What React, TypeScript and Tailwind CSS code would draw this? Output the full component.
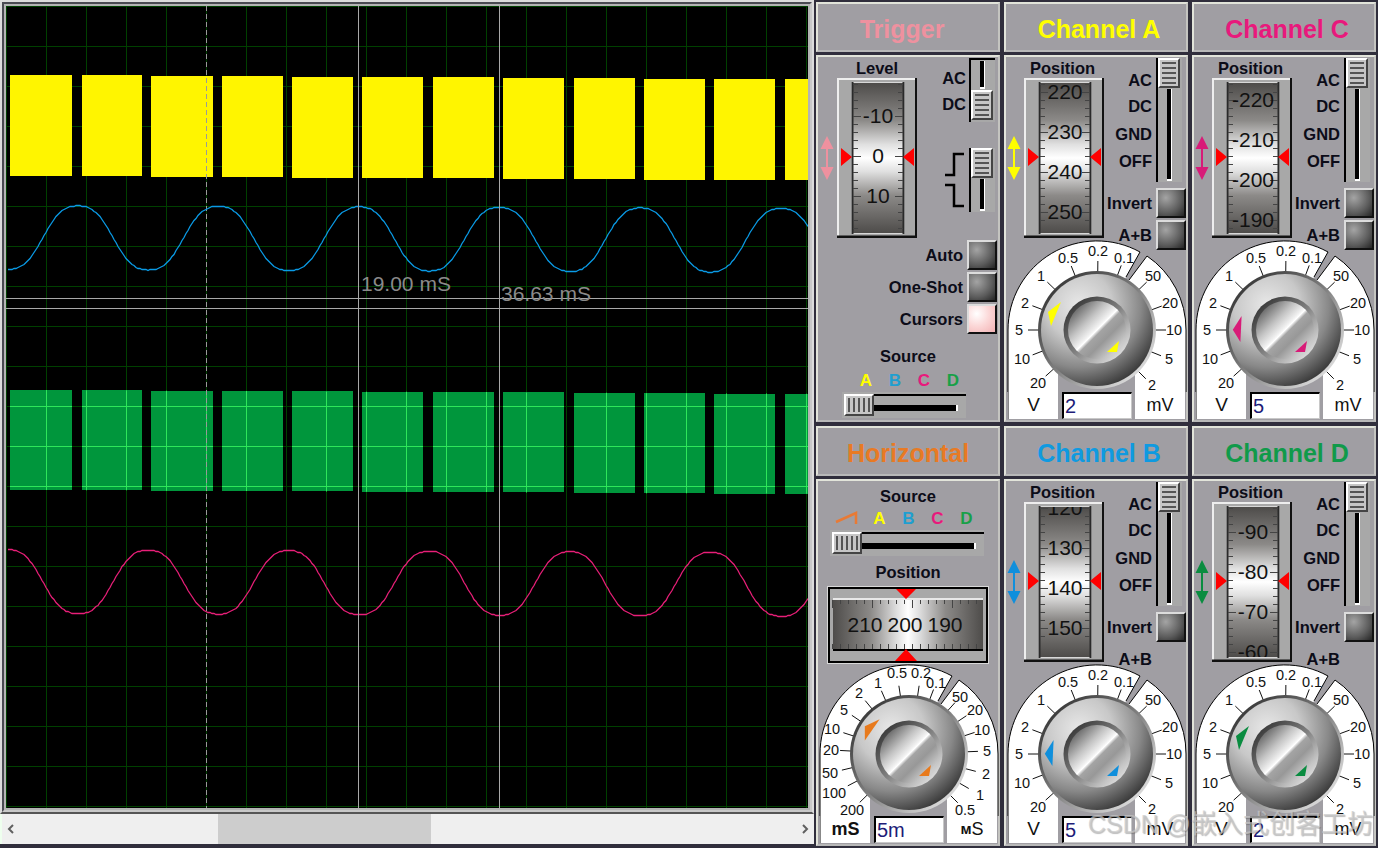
const SANS = "font-['Liberation_Sans',Arial,sans-serif]";

const BLOCKS: [number, number][] = [
  [4, 66], [76, 136], [145, 207], [216, 277], [286, 347], [356, 417],
  [427, 488], [497, 558], [568, 629], [638, 699], [708, 769], [779, 802],
];

// scope trace, x and y are inside the 802px canvas
function wave(mid: number, amp: number, peakX: number, drift: number) {
  const pts: string[] = [];
  for (let x = 2; x <= 802; x += 2) {
    const t = ((x - peakX) / 140.6) * Math.PI * 2;
    const y = mid + (x / 802) * drift - (amp * (Math.cos(t) - 0.06 * Math.cos(3 * t))) / 0.94;
    pts.push(`${x},${Math.round(y) + 0.5}`);
  }
  return pts.join(" ");
}

function Scope() {
  const lines = Array.from({ length: 21 }, (_, i) => i * 40 + 0.5);
  const grid = (stroke: string) => (
    <g stroke={stroke} strokeWidth="1" shapeRendering="crispEdges">
      {lines.map((p) => (
        <line key={`v${p}`} x1={p} y1="0" x2={p} y2="802" />
      ))}
      {lines.map((p) => (
        <line key={`h${p}`} x1="0" y1={p} x2="802" y2={p} />
      ))}
    </g>
  );
  return (
    <svg width="802" height="802" className="block bg-black">
      <defs>
        <clipPath id="green-clip">
          {BLOCKS.map(([a, b], i) => (
            <rect key={a} x={a} y={384 + i * 0.35} width={b - a} height="100" />
          ))}
        </clipPath>
      </defs>
      {grid("#004000")}
      <g shapeRendering="crispEdges">
        {BLOCKS.map(([a, b], i) => (
          <rect key={a} x={a} y={Math.round(69 + i * 0.4)} width={b - a} height="101" fill="#fff500" />
        ))}
        {BLOCKS.map(([a, b], i) => (
          <rect key={a} x={a} y={Math.round(384 + i * 0.35)} width={b - a} height="100" fill="#00963c" />
        ))}
      </g>
      <g clipPath="url(#green-clip)">{grid("#2ee65a")}</g>
      <line x1="200.5" y1="0" x2="200.5" y2="802" stroke="#9a9a9a" strokeDasharray="5 3" shapeRendering="crispEdges" />
      <polyline points={wave(231, 32, 72, 3)} fill="none" stroke="#0a9be6" strokeWidth="1.3" />
      <polyline points={wave(575, -32, 72, 3)} fill="none" stroke="#e81f78" strokeWidth="1.3" />
      <g stroke="#a8a8a8" strokeWidth="1" shapeRendering="crispEdges">
        <line x1="352.5" y1="0" x2="352.5" y2="802" />
        <line x1="493.5" y1="0" x2="493.5" y2="802" />
        <line x1="0" y1="292.5" x2="802" y2="292.5" />
        <line x1="0" y1="302.5" x2="802" y2="302.5" />
      </g>
      <text x="355" y="285" fontSize="21" fill="#8a8a8a" fontFamily="Liberation Sans">19.00 mS</text>
      <text x="495" y="295" fontSize="21" fill="#8a8a8a" fontFamily="Liberation Sans">36.63 mS</text>
    </svg>
  );
}

function Chevron({ left }: { left?: boolean }) {
  return (
    <svg width="8" height="10" viewBox="0 0 8 10" className="block">
      <path d={left ? "M6 1 L2 5 L6 9" : "M2 1 L6 5 L2 9"} fill="none" stroke="#606060" strokeWidth="2" />
    </svg>
  );
}

function ScrollBar() {
  return (
    <div className="flex h-[30px] items-center bg-[#efefef] border-l-2 border-[#efe]">
      <div className="flex w-[216px] pl-[5px]">
        <Chevron left />
      </div>
      <div className="h-full w-[213px] bg-[#cdcdcd]" />
      <div className="flex flex-1 justify-end pr-[5px]">
        <Chevron />
      </div>
    </div>
  );
}

function SharedDefs() {
  return (
    <svg width="0" height="0" className="block">
      <defs>
        <linearGradient id="drum-v" x1="0" y1="0" x2="0" y2="1">
          <stop offset="0" stopColor="#4e4c4a" />
          <stop offset="0.25" stopColor="#8c8a88" />
          <stop offset="0.41" stopColor="#e0e0e0" />
          <stop offset="0.5" stopColor="#ffffff" />
          <stop offset="0.59" stopColor="#e0e0e0" />
          <stop offset="0.75" stopColor="#8c8a88" />
          <stop offset="1" stopColor="#4e4c4a" />
        </linearGradient>
        <linearGradient id="drum-h" x1="0" y1="0" x2="1" y2="0">
          <stop offset="0" stopColor="#4e4c4a" />
          <stop offset="0.25" stopColor="#8c8a88" />
          <stop offset="0.42" stopColor="#dcdcdc" />
          <stop offset="0.5" stopColor="#ffffff" />
          <stop offset="0.58" stopColor="#dcdcdc" />
          <stop offset="0.75" stopColor="#8c8a88" />
          <stop offset="1" stopColor="#4e4c4a" />
        </linearGradient>
        <radialGradient id="knob-body" cx="0.34" cy="0.28" r="0.85">
          <stop offset="0" stopColor="#e8e8e8" />
          <stop offset="0.35" stopColor="#c8c8c8" />
          <stop offset="0.65" stopColor="#888888" />
          <stop offset="0.9" stopColor="#3c3c3c" />
          <stop offset="1" stopColor="#2c2c2c" />
        </radialGradient>
        <linearGradient id="knob-rim" x1="0.15" y1="0.15" x2="0.85" y2="0.85">
          <stop offset="0" stopColor="#3e3e3e" />
          <stop offset="0.5" stopColor="#808080" />
          <stop offset="1" stopColor="#d8d8d8" />
        </linearGradient>
        <linearGradient id="knob-cap" x1="0.15" y1="0.15" x2="0.85" y2="0.85">
          <stop offset="0" stopColor="#707070" />
          <stop offset="0.28" stopColor="#c4c4c4" />
          <stop offset="0.46" stopColor="#f0f0f0" />
          <stop offset="0.5" stopColor="#ffffff" />
          <stop offset="0.56" stopColor="#a4a4a4" />
          <stop offset="0.72" stopColor="#989898" />
          <stop offset="1" stopColor="#d0d0d0" />
        </linearGradient>
        <clipPath id="drum-clip">
          <rect x="16" y="5" width="50" height="150" />
        </clipPath>
      </defs>
    </svg>
  );
}

function UpDownArrow({ color }: { color: string }) {
  return (
    <svg width="14" height="44" viewBox="0 0 14 44" className="block shrink-0">
      <path d="M7 0 L13.5 13 L0.5 13 Z M7 44 L13.5 31 L0.5 31 Z" fill={color} />
      <rect x="6" y="12" width="2" height="20" fill={color} />
    </svg>
  );
}

function Drum({ first, values }: { first: number; values: string[] }) {
  const ticks = Array.from({ length: 25 }, (_, i) => first - 64 + i * 8);
  return (
    <svg width="80" height="160" viewBox="0 0 80 160" className="block shrink-0">
      <rect x="0" y="0" width="80" height="160" fill="#a8a8a8" />
      <path d="M0 160 V0 H80 V2 H2 V160 Z" fill="#eeeeee" />
      <path d="M80 0 V160 H0 V157.5 H78 V0 Z" fill="#111" />
      <rect x="14" y="4" width="54" height="152" fill="#d8d8d8" />
      <rect x="16" y="5" width="50" height="150" fill="url(#drum-v)" />
      <rect x="14.5" y="4" width="2" height="152" fill="#2a2a2a" />
      <rect x="65.5" y="4" width="2" height="152" fill="#2a2a2a" />
      <g clipPath="url(#drum-clip)" shapeRendering="crispEdges">
        {ticks.map((y) => {
          const major = (y - first) % 40 === 0;
          return (
            <g key={y} stroke="#444">
              <line x1="16" y1={y} x2={major ? 24 : 21} y2={y} />
              <line x1={major ? 58 : 61} y1={y} x2="66" y2={y} />
            </g>
          );
        })}
      </g>
      <g clipPath="url(#drum-clip)" fontSize="21" fontFamily="Liberation Sans" fill="#111" textAnchor="middle">
        {values.map((v, i) => (
          <text key={v} x="41" y={first + i * 40 + 7}>
            {v}
          </text>
        ))}
      </g>
      <path d="M4 70 L15 79 L4 88 Z M77 70 L66 79 L77 88 Z" fill="#ff0000" />
    </svg>
  );
}

function HDrum() {
  const ticks = Array.from({ length: 19 }, (_, i) => 4 + i * 8);
  return (
    <svg width="162" height="78" viewBox="0 0 162 78" className="block">
      <rect x="0" y="0" width="162" height="78" fill="#d8d8d8" />
      <rect x="2" y="2" width="158" height="74" fill="#a8a8a8" stroke="#000" strokeWidth="2" />
      <rect x="6" y="13" width="150" height="52" fill="url(#drum-h)" />
      <rect x="6" y="12" width="150" height="2" fill="#e8e8e8" />
      <rect x="6" y="63" width="150" height="2" fill="#000" />
      <g stroke="#444" shapeRendering="crispEdges">
        {ticks.map((x) => (
          <g key={x}>
            <line x1={x + 1} y1="14" x2={x + 1} y2={(x - 4) % 40 === 0 ? 22 : 18} />
            <line x1={x + 1} y1="58" x2={x + 1} y2="63" />
          </g>
        ))}
      </g>
      <g fontSize="21" fontFamily="Liberation Sans" fill="#111" textAnchor="middle">
        <text x="38" y="46">210</text>
        <text x="78" y="46">200</text>
        <text x="118" y="46">190</text>
      </g>
      <path d="M69 3 H89 L79 13 Z M68 75 L79 63 L90 75 Z" fill="#ff0000" />
    </svg>
  );
}

type Mark = [string, number, number];

const CHANNEL_MARKS: Mark[] = [
  ["0.1", 120, 18], ["0.2", 94, 11], ["0.5", 64, 18], ["1", 37, 36], ["2", 21, 63],
  ["5", 15, 90], ["10", 18, 119], ["20", 34, 143], ["50", 149, 36], ["20", 166, 63],
  ["10", 170, 90], ["5", 165, 119], ["2", 148, 145],
];

const TIME_MARKS: Mark[] = [
  ["0.1", 120, 19], ["0.2", 105, 9], ["0.5", 81, 9], ["1", 62, 19], ["2", 43, 29],
  ["5", 28, 46], ["10", 16, 65], ["20", 15, 86], ["50", 14, 109], ["100", 18, 129],
  ["200", 36, 146], ["50", 144, 33], ["20", 159, 46], ["10", 166, 66], ["5", 171, 87],
  ["2", 170, 110], ["1", 164, 131], ["0.5", 149, 146],
];

function Knob({ marks, color, angle }: { marks: Mark[]; color: string; angle: number }) {
  const cx = 93;
  const cy = 90;
  return (
    <svg width="181" height="152" viewBox="2 0 181 152" className="block">
      <path d="M4 152 V90 A89 89 0 0 1 136 12 L122 37 L93 90 L54 125 V152 Z" fill="#fff" />
      <path d="M182 152 V90 A89 89 0 0 0 143 16 L125 40 L93 90 L131 125 V152 Z" fill="#fff" />
      <path d="M4 152 V90 A89 89 0 0 1 136 12 L122 37" fill="none" stroke="#000" />
      <path d="M182 152 V90 A89 89 0 0 0 143 16 L125 40" fill="none" stroke="#000" />
      <g stroke="#111">
        {marks.map(([label, x, y]) => {
          const a = Math.atan2(y - cy, x - cx);
          return (
            <line
              key={`${label}${x}`}
              x1={cx + Math.cos(a) * 57}
              y1={cy + Math.sin(a) * 57}
              x2={cx + Math.cos(a) * 69}
              y2={cy + Math.sin(a) * 69}
            />
          );
        })}
      </g>
      <g fontSize="14.5" fontFamily="Liberation Sans" fill="#111" textAnchor="middle">
        {marks.map(([label, x, y]) => (
          <text key={`${label}${x}`} x={x} y={y + 5}>
            {label}
          </text>
        ))}
      </g>
      <circle cx={cx} cy={cy} r="59" fill="url(#knob-rim)" />
      <circle cx={cx} cy={cy} r="56" fill="url(#knob-body)" />
      <circle cx={cx} cy={cy} r="33.5" fill="url(#knob-rim)" />
      <circle cx={cx} cy={cy} r="29" fill="url(#knob-cap)" />
      <path
        d="M44 72 L57 62 L47 86 Z"
        fill={color}
        transform={`rotate(${angle} ${cx} ${cy})`}
      />
      <path d="M103 112 L115 101 L113 112 Z" fill={color} />
    </svg>
  );
}

function KnobBase({ left, right, value, small }: { left: string; right: React.ReactNode; value: string; small?: boolean }) {
  return (
    <div className="flex h-[27px] items-stretch pl-[2px]">
      <div className={`flex w-[50px] items-center justify-center bg-white pb-[1px] border-l border-[#888] text-[#111] ${small ? "text-[18px] font-bold" : "text-[19px]"}`}>
        {left}
      </div>
      <input
        readOnly
        value={value}
        className="ml-[4px] w-[70px] min-w-0 bg-white border-l-2 border-t-2 border-black border-r border-b border-r-[#c8c8c8] border-b-[#c8c8c8] pl-[1px] text-[20px] leading-none text-[#201c78] outline-none"
      />
      <div className="ml-[3px] flex w-[50px] items-center justify-center bg-white pb-[1px] text-[18px] text-[#111]">
        {right}
      </div>
    </div>
  );
}

function Label({ children, className = "" }: { children: React.ReactNode; className?: string }) {
  return <div className={`text-[16.5px] font-bold leading-none text-[#0c0c18] ${className}`}>{children}</div>;
}

function RoundButton({ on, height = "h-[30px]" }: { on?: boolean; height?: string }) {
  return (
    <div
      className={`w-[30px] shrink-0 border-2 border-t-[#dcdcdc] border-l-[#dcdcdc] border-r-[#111] border-b-[#111] ${height} ${
        on
          ? "bg-[radial-gradient(circle_at_30%_30%,#ffffff,#fbd6d6_50%,#f2b2b4)]"
          : "bg-[radial-gradient(circle_at_30%_30%,#a4a4a4,#5c5c5c_60%,#242424)]"
      }`}
    />
  );
}

function ThumbStripes({ vertical }: { vertical?: boolean }) {
  return (
    <div className={`flex h-full w-full items-center justify-center gap-[3px] bg-[#c6c6c6] border-2 border-t-white border-l-white border-r-[#444] border-b-[#444] ${vertical ? "flex-row" : "flex-col"}`}>
      {[0, 1, 2, 3, 4].map((i) => (
        <div key={i} className={vertical ? "h-[14px] w-[2px] bg-[#555]" : "h-[2px] w-[14px] bg-[#555]"} />
      ))}
    </div>
  );
}

function VSlider({ height, thumbBottom, className = "" }: { height: string; thumbBottom?: boolean; className?: string }) {
  return (
    <div className={`flex w-[26px] shrink-0 bg-[#a8a8a8] border-l-2 border-black ${height} ${thumbBottom ? "flex-col-reverse pb-[2px] border-t-2" : "flex-col"} ${className}`}>
      <div className="h-[30px] w-[22px] shrink-0">
        <ThumbStripes />
      </div>
      <div className="flex min-h-0 flex-1 w-[22px] justify-center py-[1px]">
        <div className="w-[5px] bg-black border-b-2 border-r border-white" />
      </div>
    </div>
  );
}

function HSlider({ width }: { width: string }) {
  return (
    <div className={`flex h-[26px] items-stretch bg-[#a8a8a8] pt-[2px] pb-[2px] ${width}`}>
      <div className="ml-[2px] w-[30px] shrink-0">
        <ThumbStripes vertical />
      </div>
      <div className="flex flex-1 flex-col">
        <div className="h-[2px] bg-black" />
        <div className="mt-[9px] mr-[8px] h-[6px] bg-black border-r-2 border-white" />
      </div>
    </div>
  );
}

function SourceLetters({ className }: { className: string }) {
  return (
    <div className={`flex text-[17px] font-bold leading-none ${className}`}>
      <span className="w-[29px] text-center text-[#ffff00]">A</span>
      <span className="w-[29px] text-center text-[#1e9fd0]">B</span>
      <span className="w-[29px] text-center text-[#e8197c]">C</span>
      <span className="w-[29px] text-center text-[#18a048]">D</span>
    </div>
  );
}

function Header({ title, color }: { title: string; color: string }) {
  return (
    <div className={`flex h-[50px] shrink-0 items-center justify-center bg-[#a09ea3] pt-[5px] border-2 border-t-[#e2e4da] border-l-[#e2e4da] border-r-[#c4c4c0] border-b-[#b8b8b8] text-[25px] font-bold ${color}`}>
      {title}
    </div>
  );
}

function Body({ children }: { children: React.ReactNode }) {
  return (
    <div className="flex min-h-0 flex-1 flex-col bg-[#a09ea3] border-2 border-t-[#e2e4da] border-l-[#e2e4da] border-r-[#c4c4c0] border-b-[#b8b8b8]">
      {children}
    </div>
  );
}

function Cell({ children }: { children: React.ReactNode }) {
  return <div className="flex h-[424px] w-[188px] flex-col gap-[3px] p-[2px]">{children}</div>;
}

function Channel({
  title,
  color,
  fill,
  first,
  values,
  angle,
  value,
  addButton,
}: {
  title: string;
  color: string;
  fill: string;
  first: number;
  values: string[];
  angle: number;
  value: string;
  addButton?: boolean;
}) {
  return (
    <Cell>
      <Header title={title} color={`pl-[6px] ${color}`} />
      <Body>
        <div className="flex h-[193px] shrink-0">
          <div className="flex w-[100px] shrink-0 flex-col">
            <Label className="mt-[3px] h-[18px] pl-[13px] text-center">Position</Label>
            <div className="flex items-center pl-[1px]">
              <div className="w-[17px]">
                <UpDownArrow color={fill} />
              </div>
              <Drum first={first} values={values} />
            </div>
          </div>
          <div className="flex flex-1 flex-col pt-[1px]">
            <div className="flex h-[130px] justify-end">
              <div className="flex flex-col items-end pr-[4px] pt-[14px]">
                <Label className="h-[26px]">AC</Label>
                <Label className="h-[28px]">DC</Label>
                <Label className="h-[27px]">GND</Label>
                <Label>OFF</Label>
              </div>
              <VSlider height="h-[124px]" className="mr-[4px]" />
            </div>
            <div className="flex items-center justify-end gap-[4px]">
              <Label>Invert</Label>
              <RoundButton />
            </div>
            <div className="mt-[2px] flex items-center justify-end gap-[4px]">
              <Label>A+B</Label>
              {addButton ? <RoundButton /> : <div className="h-[30px] w-[30px]" />}
            </div>
          </div>
        </div>
        <div className="-mt-[10px]">
          <Knob marks={CHANNEL_MARKS} color={fill} angle={angle} />
          <KnobBase left="V" right="mV" value={value} />
        </div>
      </Body>
    </Cell>
  );
}

function Trigger() {
  return (
    <Cell>
      <Header title="Trigger" color="pr-[12px] text-[#ee919f]" />
      <Body>
        <div className="flex h-[183px] shrink-0">
          <div className="flex w-[100px] shrink-0 flex-col">
            <Label className="mt-[3px] h-[18px] pl-[18px] text-center">Level</Label>
            <div className="flex items-center pl-[2px]">
              <div className="w-[17px]">
                <UpDownArrow color="#ee919f" />
              </div>
              <Drum first={38} values={["-10", "0", "10"]} />
            </div>
          </div>
          <div className="flex flex-1 flex-col items-end pr-[3px] pt-[1px]">
            <div className="flex justify-end gap-[3px]">
              <div className="flex flex-col items-end pt-[12px]">
                <Label className="h-[26px]">AC</Label>
                <Label>DC</Label>
              </div>
              <VSlider height="h-[64px]" thumbBottom />
            </div>
            <div className="mt-[26px] flex items-center gap-[4px]">
              <svg width="20" height="56" viewBox="0 0 20 56" className="block">
                <path d="M0 23 H9 V2 H19 M0 33 H9 V54 H19" fill="none" stroke="#000" strokeWidth="2.5" />
              </svg>
              <VSlider height="h-[64px]" />
            </div>
          </div>
        </div>
        <div className="flex flex-col items-end gap-[2px] pr-[1px]">
          <div className="flex items-center gap-[4px]">
            <Label>Auto</Label>
            <RoundButton />
          </div>
          <div className="flex items-center gap-[4px]">
            <Label>One-Shot</Label>
            <RoundButton />
          </div>
          <div className="flex items-center gap-[4px]">
            <Label>Cursors</Label>
            <RoundButton on />
          </div>
        </div>
        <div className="mt-[14px] flex flex-col items-center">
          <Label>Source</Label>
          <SourceLetters className="mt-[7px] pl-[3px]" />
          <div className="mt-[3px] mr-[9px]">
            <HSlider width="w-[124px]" />
          </div>
        </div>
      </Body>
    </Cell>
  );
}

function Horizontal() {
  return (
    <Cell>
      <Header title="Horizontal" color="text-[#e87a24]" />
      <Body>
        <div className="flex flex-col items-center">
          <Label className="mt-[7px]">Source</Label>
          <div className="mt-[5px] flex items-center">
            <svg width="24" height="14" viewBox="0 0 24 14" className="mr-[6px] block">
              <path d="M1 11 L21 2 V13" fill="none" stroke="#e87a35" strokeWidth="2.5" />
            </svg>
            <SourceLetters className="" />
          </div>
          <div className="mt-[3px] mr-[2px]">
            <HSlider width="w-[154px]" />
          </div>
          <Label className="mt-[8px]">Position</Label>
          <div className="mt-[6px]">
            <HDrum />
          </div>
        </div>
        <Knob marks={TIME_MARKS} color="#e87a1c" angle={12} />
        <KnobBase
          left="mS"
          right={
            <>
              <span className="text-[15px] font-bold">м</span>S
            </>
          }
          value="5m"
          small
        />
      </Body>
    </Cell>
  );
}

export default function App() {
  return (
    <div className={`relative flex h-[848px] w-[1378px] overflow-hidden bg-[#302e3c] ${SANS}`}>
      <div className="flex w-[814px] shrink-0 flex-col">
        <div className="border-2 border-[#dcdcdc] border-b-[#555]">
          <div className="border-2 border-[#4a4a52] border-b-[#c8c8c8] border-r-[#c8c8c8]">
            <div className="border-2 border-[#b4b4b4]">
              <Scope />
            </div>
          </div>
        </div>
        <ScrollBar />
      </div>
      <div className="flex w-[564px] flex-col">
        <div className="flex">
          <Trigger />
          <Channel title="Channel A" color="text-[#ffff00]" fill="#ffff00" first={14} values={["220", "230", "240", "250"]} angle={0} value="2" addButton />
          <Channel title="Channel C" color="text-[#e8197c]" fill="#d81b78" first={22} values={["-220", "-210", "-200", "-190"]} angle={-20} value="5" addButton />
        </div>
        <div className="flex">
          <Horizontal />
          <Channel title="Channel B" color="text-[#0f9ae0]" fill="#0f8fdc" first={6} values={["120", "130", "140", "150"]} angle={-20} value="5" />
          <Channel title="Channel D" color="text-[#109a4a]" fill="#0a8c40" first={30} values={["-90", "-80", "-70", "-60"]} angle={0} value="2" />
        </div>
      </div>
      <SharedDefs />
      <div className="pointer-events-none absolute right-[5px] bottom-[11px] flex items-center whitespace-nowrap font-['Liberation_Sans','Noto_Sans_CJK_SC',sans-serif] text-[25px] leading-none text-[#c8c8c8]/70 [text-shadow:1px_1px_1px_rgba(70,70,70,0.35)]">
        CSDN @<span className="text-[26px]">嵌入式创客工坊</span>
      </div>
    </div>
  );
}
